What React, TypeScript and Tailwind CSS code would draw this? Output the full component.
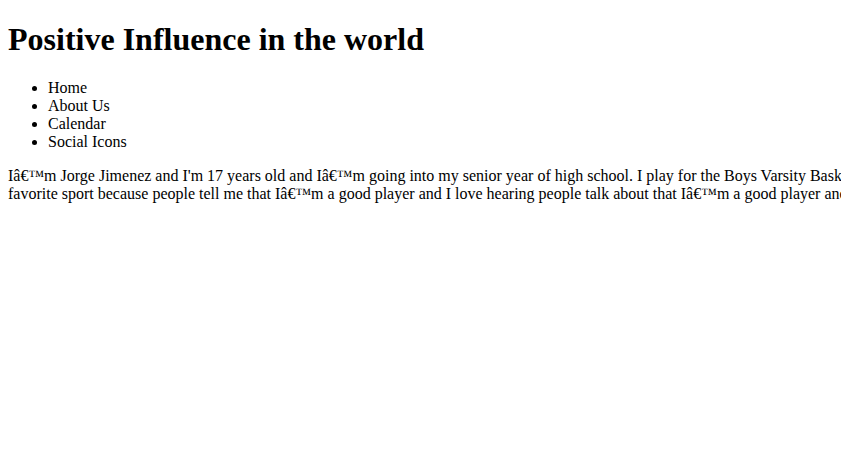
export default function App() {
  return (
    <div className="min-h-[469px] overflow-hidden bg-white px-2 font-['Liberation_Serif','Times_New_Roman',serif] text-black">
      <h1 className="pt-[21px] text-[32px] font-bold leading-[37px]">Positive Influence in the world</h1>
      <ul className="mt-[21px] list-disc pl-10 text-base leading-[18px]">
        <li>Home</li>
        <li>About Us</li>
        <li>Calendar</li>
        <li>Social Icons</li>
      </ul>
      <p className="mt-4 whitespace-nowrap text-base leading-[18px]">
        Iâ€™m Jorge Jimenez and I'm 17 years old and Iâ€™m going into my senior year of high school. I play for the
        Boys Varsity Basketball team and basketball is my
        <br />
        favorite sport because people tell me that Iâ€™m a good player and I love hearing people talk about that
        Iâ€™m a good player and it makes me want to keep getting better.
      </p>
    </div>
  );
}
